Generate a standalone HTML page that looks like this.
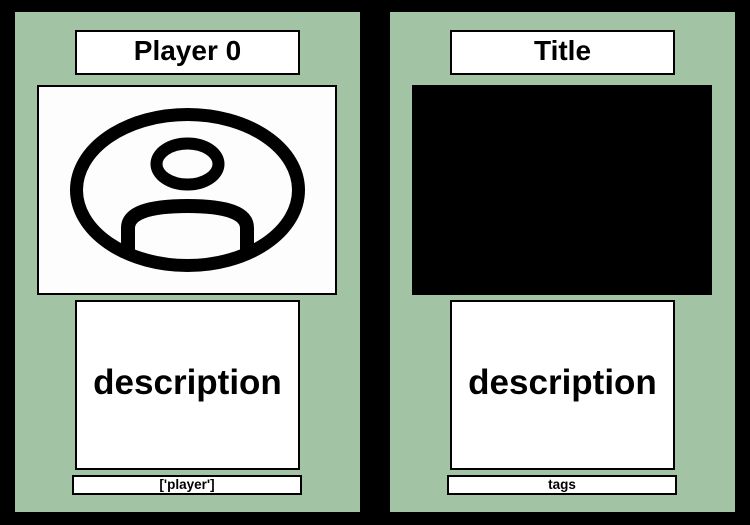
<!DOCTYPE html>
<html><head><style>
body{margin:0;width:750px;height:525px;background:#000;position:relative;overflow:hidden;font-family:"Liberation Sans",Arial,sans-serif;font-weight:bold}
.card{position:absolute;top:12px;width:345px;height:500px;background:#a3c4a4}
.b{position:absolute;background:#fff;border:2px solid #000;box-sizing:border-box;display:flex;align-items:center;justify-content:center;color:#000}
.t{left:60px;top:18px;width:225px;height:45px;font-size:28px;padding-bottom:4px}
.img{left:22px;top:73px;width:300px;height:210px;background:#fdfdfd}
.d{left:60px;top:288px;width:225px;height:170px;font-size:35px;padding-bottom:4px}
.g{left:57px;top:463px;width:230px;height:20px;font-size:13.5px;padding-bottom:2px}
</style></head><body>
<div class="card" style="left:15px">
<div class="b t">Player 0</div>
<div class="b img"><svg width="296" height="206" viewBox="39 87 296 206" style="position:absolute;left:0;top:0">
<defs><clipPath id="c"><ellipse cx="187.5" cy="190" rx="108" ry="72"/></clipPath></defs>
<ellipse cx="187.5" cy="190" rx="111" ry="75.5" fill="none" stroke="#000" stroke-width="13"/>
<ellipse cx="187.5" cy="164" rx="31" ry="20.5" fill="none" stroke="#000" stroke-width="12"/>
<path d="M128,270 V228 Q128,206 187.5,206 Q247,206 247,228 V270" fill="none" stroke="#000" stroke-width="14" clip-path="url(#c)"/>
</svg></div>
<div class="b d">description</div>
<div class="b g">['player']</div>
</div>
<div class="card" style="left:390px">
<div class="b t">Title</div>
<div class="b img" style="background:#000"></div>
<div class="b d">description</div>
<div class="b g">tags</div>
</div>
</body></html>
